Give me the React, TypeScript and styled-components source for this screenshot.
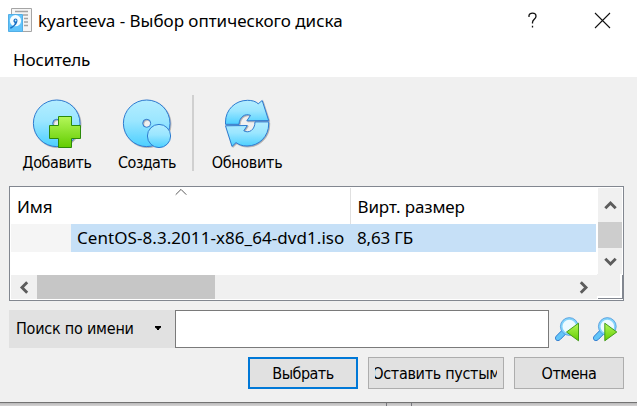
import React from 'react';
import styled, { createGlobalStyle } from 'styled-components';

const GlobalStyle = createGlobalStyle`
  * { box-sizing: border-box; }
  html, body { margin: 0; padding: 0; overflow: hidden; }
  button { margin: 0; padding: 0; border: 0; background: none; color: inherit; }
  svg { display: block; flex: none; }
`;

const uiFont = '"Noto Sans", "Open Sans", sans-serif';
const controlFont = '"DejaVu Sans Condensed", "DejaVu Sans", sans-serif';

const Screen = styled.div`
  width: 637px;
  height: 406px;
  display: flex;
  flex-direction: column;
  background: #cbc9ca;
  color: #000;
  font: 17px ${uiFont};
`;

const Dialog = styled.main`
  height: 403px;
  flex: none;
  display: flex;
  flex-direction: column;
  background: #f0f0f0;
  border-bottom: 1px solid #737373;
`;

const Desktop = styled.div`
  flex: 1;
  display: flex;
  background: linear-gradient(#b9b9b9, #d6d4d5);
`;

const DesktopPane = styled.div<{ $width: number }>`
  width: ${(p) => p.$width}px;
  border-right: 1px solid #77777c;
`;

const TitleBar = styled.header`
  height: 40px;
  display: flex;
  align-items: center;
  padding: 0 26px 0 8px;
  background: #fff;
`;

const Title = styled.h1`
  flex: 1;
  margin: 2px 0 0 5px;
  font-size: 17px;
  font-weight: 400;
  line-height: 26px;
  letter-spacing: -0.02px;
  white-space: nowrap;
`;

const WindowButton = styled.button<{ $gap?: number }>`
  width: 17px;
  height: 17px;
  display: grid;
  place-items: center;
  margin-left: ${(p) => p.$gap ?? 0}px;
`;

const MenuBar = styled.nav`
  height: 37px;
  padding: 6px 13px;
  background: #fff;
`;

const MenuItem = styled.button`
  font: 17px/28px ${uiFont};
  letter-spacing: -0.1px;
`;

const Toolbar = styled.div`
  height: 109px;
  display: flex;
  padding: 18px 0 0 9px;
`;

const Tool = styled.button<{ $width: number }>`
  width: ${(p) => p.$width}px;
  height: 76px;
  display: flex;
  flex-direction: column;
  align-items: center;
  padding-top: 4px;
`;

const ToolLabel = styled.span<{ $spacing: number }>`
  margin-top: 3px;
  font: 16px/22px ${controlFont};
  letter-spacing: ${(p) => p.$spacing}px;
  white-space: nowrap;
`;

const Separator = styled.div`
  width: 2px;
  height: 76px;
  margin-left: 3px;
  background: #d0d0d0;
`;

const TableFrame = styled.section`
  width: 615px;
  height: 115px;
  flex: none;
  margin-left: 9px;
  display: grid;
  grid-template: 86px 25px / 587px 26px;
  padding-top: 1px;
  background: #fff;
  border: 1px solid #828790;
`;

const Table = styled.div`
  padding: 0 1px;
`;

const HeaderRow = styled.div`
  height: 36px;
  display: flex;
`;

const HeaderCell = styled.div<{ $width: number; $divided?: boolean }>`
  position: relative;
  width: ${(p) => p.$width}px;
  padding: 6px 0 0 ${(p) => (p.$divided ? 6 : 6.5)}px;
  border-right: ${(p) => (p.$divided ? '1px solid #e0e0e0' : '0')};
  line-height: 26px;
  letter-spacing: -0.13px;
  white-space: nowrap;
`;

const SortMark = styled.svg`
  position: absolute;
  left: 164px;
  top: 0;
`;

const DataRow = styled.div`
  height: 28px;
  display: flex;
  line-height: 28px;
  background: #c6e0f7;
  white-space: nowrap;
`;

const Indent = styled.div`
  width: 60px;
  background: #f5f5f5;
`;

const Cell = styled.div<{ $width: number; $pad: number; $spacing?: number }>`
  width: ${(p) => p.$width}px;
  padding-left: ${(p) => p.$pad}px;
  letter-spacing: ${(p) => p.$spacing ?? 0}px;
`;

const VerticalScroll = styled.div`
  width: 24px;
  height: 86px;
  margin-left: 1px;
  display: flex;
  flex-direction: column;
  background: #f0f0f0;
`;

const HorizontalScroll = styled.div`
  width: 586px;
  height: 24px;
  margin: 1px 0 0 1px;
  display: flex;
  background: #f0f0f0;
`;

const ScrollArrow = styled.div<{ $w: number; $h: number }>`
  width: ${(p) => p.$w}px;
  height: ${(p) => p.$h}px;
  display: grid;
  place-items: center;
`;

const Thumb = styled.div<{ $w: number; $h: number; $push?: boolean }>`
  width: ${(p) => p.$w}px;
  height: ${(p) => p.$h}px;
  margin-right: ${(p) => (p.$push ? 'auto' : '0')};
  background: ${(p) => (p.$push ? '#c6c6c6' : '#cdcdcd')};
`;

const SizeGrip = styled.div`
  height: 24px;
  margin: 0 1px 1px 0;
  background: #f0f0f0;
  border: solid #fff;
  border-width: 0 2px 2px 0;
  box-shadow: 1px 1px 0 #828790;
`;

const SearchRow = styled.div`
  height: 38px;
  flex: none;
  display: flex;
  align-items: center;
  margin: 9px 0 0 9px;
`;

const SearchMode = styled.button`
  width: 166px;
  height: 38px;
  display: flex;
  align-items: center;
  justify-content: space-between;
  padding: 0 14px 0 7px;
  background: #e1e1e1;
  font: 16px/22px ${controlFont};
  letter-spacing: -0.22px;
`;

const DropMark = styled.svg`
  margin-bottom: 2px;
`;

const SearchInput = styled.input`
  width: 374px;
  height: 38px;
  margin: 0 6px 0 0;
  padding: 0 6px;
  border: 1px solid #7a7a7a;
  border-radius: 0;
  background: #fff;
  outline: 0;
  font: 17px ${uiFont};
`;

const FindButton = styled.button`
  width: 24px;
  height: 26px;
  margin-right: 14px;
`;

const Actions = styled.footer`
  display: flex;
  gap: 10px;
  margin: 9px 0 0 248px;
`;

const ActionButton = styled.button<{ $width: number; $primary?: boolean; $spacing: number }>`
  width: ${(p) => p.$width}px;
  height: 32px;
  display: flex;
  justify-content: center;
  align-items: center;
  padding: 1px 6px 0;
  border: ${(p) => (p.$primary ? '2px solid #0078d7' : '1px solid #adadad')};
  background: #e1e1e1;
  font: 16px/22px ${controlFont};
  letter-spacing: ${(p) => p.$spacing}px;
`;

const Clip = styled.span`
  width: 122px;
  display: flex;
  justify-content: center;
  overflow: hidden;
  white-space: nowrap;
`;

const Blue = ({ id }: { id: string }) => (
  <defs>
    <linearGradient id={id} x1="0" y1="0" x2="0" y2="1">
      <stop offset="0" stopColor="#b4edff" />
      <stop offset="0.45" stopColor="#9be6ff" />
      <stop offset="1" stopColor="#4ccfff" />
    </linearGradient>
    <linearGradient id={id + '-green'} x1="0" y1="0" x2="0" y2="1">
      <stop offset="0" stopColor="#b4f75a" />
      <stop offset="1" stopColor="#62cc00" />
    </linearGradient>
    <filter id={id + '-shadow'} x="-10%" y="-10%" width="125%" height="125%">
      <feDropShadow dx="0.8" dy="0.8" stdDeviation="0.5" floodColor="#555" floodOpacity="0.5" />
    </filter>
  </defs>
);

const Disc = ({ id }: { id: string }) => (
  <path
    d="M24.7 1a23.3 23.3 0 1 0 0 46.6a23.3 23.3 0 1 0 0-46.6ZM24.7 20.3a4 4 0 1 1 0 8a4 4 0 1 1 0-8Z"
    fill={`url(#${id})`}
    fillRule="evenodd"
    stroke="#2d7bd0"
    filter={`url(#${id}-shadow)`}
  />
);

const AddIcon = () => (
  <svg width="50" height="50" viewBox="0 0 50 50">
    <Blue id="add" />
    <Disc id="add" />
    <path d="M26.5 17.5h13v9h9v13h-9v9h-13v-9h-9v-13h9Z" fill="url(#add-green)" stroke="#2c8a0a" />
  </svg>
);

const CreateIcon = () => (
  <svg width="50" height="50" viewBox="0 0 50 50">
    <Blue id="create" />
    <Disc id="create" />
    <circle cx="37" cy="37" r="11.6" fill="url(#create)" stroke="#2d7bd0" />
  </svg>
);

const RefreshIcon = () => (
  <svg width="50" height="50" viewBox="0 0 50 50">
    <Blue id="refresh" />
    <g fill="url(#refresh)" stroke="#2d7bd0" filter="url(#refresh-shadow)">
      <path d="M3.5 25.3V23C3.5 10.5 13.5 1.3 25.5 1.3C30 1.3 34 2.4 36.2 4.8L40.2 1.5L46.7 21.6L24.8 21.8L28.5 16.4C23 13.9 17.3 18.2 17 25.3Z" />
      <path d="M46.7 22.9V25C46.7 37.5 37 47 25 47C20 47 16.5 45.5 14 43.6L10 47.4L3.5 26.8L25.3 26.5L21.8 31.8C27 34.8 33 30.8 33 22.9Z" />
    </g>
  </svg>
);

const DocumentIcon = () => (
  <svg width="25" height="26" viewBox="0 0 25 26">
    <Blue id="app" />
    <path d="M3.5 1.5h20v23h-20Z" fill="#f5f5f5" stroke="#a5a5a5" />
    <path d="M7 4.5h13M15 8h5M16 11.5h4M16 15h4M16 18.5h4" stroke="#a2a2a2" strokeWidth="1.4" />
    <path d="M.5 7.5h14v17H.5Z" fill="#61c4fb" stroke="#53aee6" />
    <circle cx="7.5" cy="13.7" r="5.6" fill="#f5fcff" />
    <path d="M7.5 11.5a2 2 0 0 1 2 2c0 3-2 5-5 7.2L2.5 22l-.3-2c2.6-.7 4-2 4.6-4.1a2.3 2.3 0 0 1 .7-4.4Z" fill="#176fc4" />
    <circle cx="7.6" cy="13.5" r=".9" fill="#bde8ff" />
  </svg>
);

const Chevron = ({ turn }: { turn: number }) => (
  <svg width="13" height="13" viewBox="0 0 13 13">
    <path d="M1.3 9.2L6.5 4L11.7 9.2" transform={`rotate(${turn} 6.5 6.5)`} fill="none" stroke="#5c5c5c" strokeWidth="2.9" />
  </svg>
);

const FindIcon = ({ forward }: { forward?: boolean }) => {
  const id = forward ? 'next' : 'previous';
  return (
    <svg width="25" height="25" viewBox="0 0 25 25">
      <Blue id={id} />
      <path d="M8.2 12.1L11.8 15.9L5.3 22.5C3.8 24 1.8 23.8 1 22.8C.1 21.6.3 20.2 1.4 19Z" fill="#62c5f8" stroke="#2d7bd0" />
      <circle cx="14.3" cy="9.5" r="7.9" fill="#eefaff" stroke="#84d4fb" strokeWidth="2.2" />
      <circle cx="14.3" cy="9.5" r="8.9" fill="none" stroke="#438fd8" strokeWidth=".7" />
      <path d={forward ? 'M11.8 6.2V23.8L23.8 15Z' : 'M23.5 6.2V23.8L11.5 15Z'} fill={`url(#${id}-green)`} stroke="#37940c" strokeWidth=".9" />
    </svg>
  );
};

export default function App() {
  return (
    <Screen>
      <GlobalStyle />
      <Dialog>
        <TitleBar>
          <DocumentIcon />
          <Title>kyarteeva - Выбор оптического диска</Title>
          <WindowButton aria-label="Справка">
            <svg width="9" height="17" viewBox="0 0 9 17">
              <path d="M1 5V3.4C1.4 1.8 2.8 1.2 4.5 1.2C6.6 1.2 8 2.4 8 4.3C8 7.1 4.5 7.6 4.5 10.5V11.5M4.5 13.8V15.6" fill="none" stroke="#111" strokeWidth="1.3" />
            </svg>
          </WindowButton>
          <WindowButton $gap={53} aria-label="Закрыть">
            <svg width="17" height="17" viewBox="0 0 17 17">
              <path d="M1 1L16 16M16 1L1 16" stroke="#111" strokeWidth="1.1" />
            </svg>
          </WindowButton>
        </TitleBar>
        <MenuBar>
          <MenuItem>Носитель</MenuItem>
        </MenuBar>
        <Toolbar>
          <Tool $width={96}>
            <AddIcon />
            <ToolLabel $spacing={-0.4}>Добавить</ToolLabel>
          </Tool>
          <Tool $width={84}>
            <CreateIcon />
            <ToolLabel $spacing={-0.6}>Создать</ToolLabel>
          </Tool>
          <Separator />
          <Tool $width={106}>
            <RefreshIcon />
            <ToolLabel $spacing={-0.3}>Обновить</ToolLabel>
          </Tool>
        </Toolbar>
        <TableFrame>
          <Table>
            <HeaderRow>
              <HeaderCell $width={340} $divided>
                Имя
                <SortMark width="12" height="8" viewBox="0 0 12 8">
                  <path d="M.7 6.7L6 1.4L11.3 6.7" fill="none" stroke="#5a5a5a" />
                </SortMark>
              </HeaderCell>
              <HeaderCell $width={245}>Вирт. размер</HeaderCell>
            </HeaderRow>
            <DataRow>
              <Indent />
              <Cell $width={280} $pad={6} $spacing={0.06}>CentOS-8.3.2011-x86_64-dvd1.iso</Cell>
              <Cell $width={245} $pad={6} $spacing={-0.18}>8,63 ГБ</Cell>
            </DataRow>
          </Table>
          <VerticalScroll>
            <ScrollArrow $w={25} $h={34}><Chevron turn={0} /></ScrollArrow>
            <Thumb $w={24} $h={26} />
            <ScrollArrow $w={25} $h={26}><Chevron turn={180} /></ScrollArrow>
          </VerticalScroll>
          <HorizontalScroll>
            <ScrollArrow $w={26} $h={24}><Chevron turn={-90} /></ScrollArrow>
            <Thumb $w={178} $h={24} $push />
            <ScrollArrow $w={28} $h={24}><Chevron turn={90} /></ScrollArrow>
          </HorizontalScroll>
          <SizeGrip />
        </TableFrame>
        <SearchRow>
          <SearchMode>
            Поиск по имени
            <DropMark width="6" height="4" viewBox="0 0 6 4">
              <path d="M0 0H6V1.5L4 3V4H2V3L0 1.5Z" fill="#000" />
            </DropMark>
          </SearchMode>
          <SearchInput aria-label="Поиск по имени" />
          <FindButton aria-label="Найти предыдущий"><FindIcon /></FindButton>
          <FindButton aria-label="Найти следующий"><FindIcon forward /></FindButton>
        </SearchRow>
        <Actions>
          <ActionButton $width={110} $primary $spacing={-0.5}>Выбрать</ActionButton>
          <ActionButton $width={136} $spacing={-0.3}><Clip>Оставить пустым</Clip></ActionButton>
          <ActionButton $width={110} $spacing={-0.48}>Отмена</ActionButton>
        </Actions>
      </Dialog>
      <Desktop>
        <DesktopPane $width={387} />
        <DesktopPane $width={25} />
      </Desktop>
    </Screen>
  );
}
